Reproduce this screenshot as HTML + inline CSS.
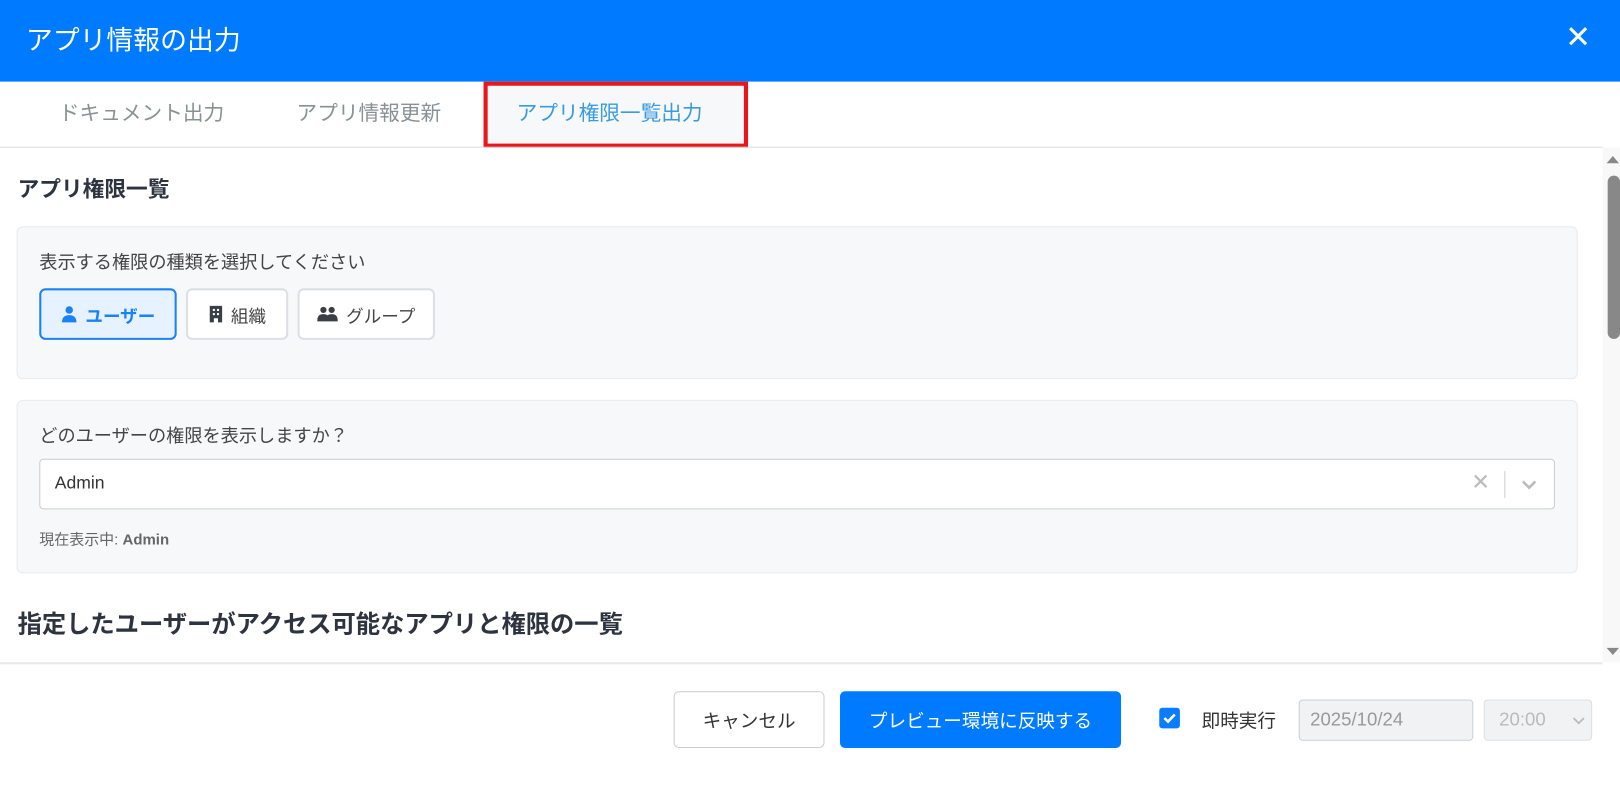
<!DOCTYPE html>
<html><head><meta charset="utf-8">
<style>
*{box-sizing:border-box;margin:0;padding:0}
body{width:1620px;height:795px;overflow:hidden;background:#fff;font-family:"Liberation Sans","Noto Sans CJK JP",sans-serif;color:#333}
#w{position:relative;width:1568px;height:770px;transform:scale(1.0332);transform-origin:0 0}
.hdr{position:absolute;left:0;top:0;width:1568px;height:79px;background:#007bff}
.hdr .t{position:absolute;left:25px;top:19px;color:#fff;font-size:26px}
.hdr .x{position:absolute;right:28px;top:22px;color:#fff;font-size:30px;line-height:30px}
.tab{position:absolute;top:93px;font-size:20px;color:#8a9195}
.red{position:absolute;left:468px;top:79px;width:256px;height:64px;border:4px solid #e8171c;background:#f7f8fa}
.line{position:absolute;left:0;top:142px;width:1551px;height:1px;background:#ddd}
.h2{position:absolute;left:17px;font-weight:bold;font-size:21px;color:#2d3440}
.card{position:absolute;left:16px;width:1511px;background:#f7f8fa;border:1px solid #e8eaed;border-radius:6px}
.lbl{position:absolute;left:38px;font-size:17.6px;color:#444}
.btn{position:absolute;top:279px;height:50px;border:2px solid #dcdfe3;border-radius:6px;background:#fff;font-size:17px;color:#444;display:flex;align-items:center;justify-content:center;gap:8px}
.sel{position:absolute;left:38px;top:444px;width:1467px;height:49px;background:#fff;border:1px solid #ccc;border-radius:4px}
.sb{position:absolute;left:1551px;top:143px;width:17px;height:498px;background:#f8f8f8}
.foot{position:absolute;left:0;top:641px;width:1551px;height:2px;background:#e8e8e8}
</style></head><body><div id="w">
<div class="hdr"><div class="t">アプリ情報の出力</div><div class="x">✕</div></div>
<div class="tab" style="left:57px">ドキュメント出力</div>
<div class="tab" style="left:287px">アプリ情報更新</div>
<div class="red"></div>
<div class="tab" style="left:500px;color:#3a9be0">アプリ権限一覧出力</div>
<div class="line"></div>
<div class="h2" style="top:167px">アプリ権限一覧</div>
<div class="card" style="top:219px;height:148px"></div>
<div class="lbl" style="top:241px">表示する権限の種類を選択してください</div>
<div class="btn" style="left:38px;width:133px;border-color:#1a82f7;background:#e6f2ff;color:#1a82f7;font-weight:bold">
<svg width="16" height="18" viewBox="0 0 16 18"><circle cx="8" cy="5" r="3.6" fill="#1a82f7"/><path d="M1 17c0-5 3-7 7-7s7 2 7 7z" fill="#1a82f7"/></svg>ユーザー</div>
<div class="btn" style="left:180px;width:99px">
<svg width="14" height="18" viewBox="0 0 14 18"><path d="M1 1h12v16H9v-4H5v4H1z" fill="#3a3f45"/><rect x="4" y="4" width="2" height="2" fill="#fff"/><rect x="8" y="4" width="2" height="2" fill="#fff"/><rect x="4" y="8" width="2" height="2" fill="#fff"/><rect x="8" y="8" width="2" height="2" fill="#fff"/></svg>組織</div>
<div class="btn" style="left:288px;width:133px">
<svg width="20" height="16" viewBox="0 0 20 16"><circle cx="6" cy="4" r="3" fill="#3a3f45"/><circle cx="14" cy="4" r="3" fill="#3a3f45"/><path d="M0 15c0-5 2-7 6-7s6 2 6 7z M9 15c0-5 1-7 5-7s6 2 6 7z" fill="#3a3f45"/></svg>グループ</div>
<div class="card" style="top:387px;height:168px"></div>
<div class="lbl" style="top:409px">どのユーザーの権限を表示しますか？</div>
<div class="sel"><span style="position:absolute;left:14px;top:13px;font-size:17px;color:#333">Admin</span>
<span style="position:absolute;left:1385px;top:9px;font-size:22px;color:#bbb">✕</span>
<span style="position:absolute;left:1417px;top:11px;width:1px;height:26px;background:#ccc"></span>
<svg style="position:absolute;left:1433px;top:19px" width="16" height="10" viewBox="0 0 16 10"><path d="M2 2l6 6 6-6" stroke="#bbb" stroke-width="2.5" fill="none"/></svg></div>
<div style="position:absolute;left:38px;top:511px;font-size:14.5px;color:#666">現在表示中: <b>Admin</b></div>
<div class="h2" style="top:585px;font-size:23.5px">指定したユーザーがアクセス可能なアプリと権限の一覧</div>
<div class="sb"><div style="position:absolute;left:5px;top:27px;width:12px;height:158px;background:#888;border-radius:6px"></div>
<div style="position:absolute;left:4px;top:8px;border:6px solid transparent;border-bottom:7px solid #888;border-top:0"></div>
<div style="position:absolute;left:4px;top:484px;border:6px solid transparent;border-top:7px solid #888;border-bottom:0"></div></div>
<div class="foot"></div>
<div style="position:absolute;left:652px;top:669px;width:146px;height:55px;border:1px solid #ccc;border-radius:5px;font-size:18px;display:flex;align-items:center;justify-content:center;color:#333">キャンセル</div>
<div style="position:absolute;left:813px;top:669px;width:272px;height:55px;background:#007bff;border-radius:5px;font-size:18px;display:flex;align-items:center;justify-content:center;color:#fff">プレビュー環境に反映する</div>
<div style="position:absolute;left:1122px;top:685px;width:20px;height:20px;background:#0a7cff;border-radius:3px"><svg width="20" height="20" viewBox="0 0 20 20"><path d="M5 10l3.5 3.5L15 6.5" stroke="#fff" stroke-width="2.5" fill="none"/></svg></div>
<div style="position:absolute;left:1163px;top:684px;font-size:18px;color:#333">即時実行</div>
<div style="position:absolute;left:1257px;top:677px;width:169px;height:40px;background:#f1f2f4;border:1px solid #ccd0d5;border-radius:4px;font-size:18px;color:#999;padding:8px 10px">2025/10/24</div>
<div style="position:absolute;left:1436px;top:677px;width:105px;height:40px;background:#f1f2f4;border:1px solid #dde0e3;border-radius:4px;font-size:18px;color:#bbb;padding:8px 14px">20:00
<svg style="position:absolute;right:6px;top:16px" width="12" height="8" viewBox="0 0 12 8"><path d="M1 1l5 5 5-5" stroke="#bbb" stroke-width="1.8" fill="none"/></svg></div>
</div></body></html>
